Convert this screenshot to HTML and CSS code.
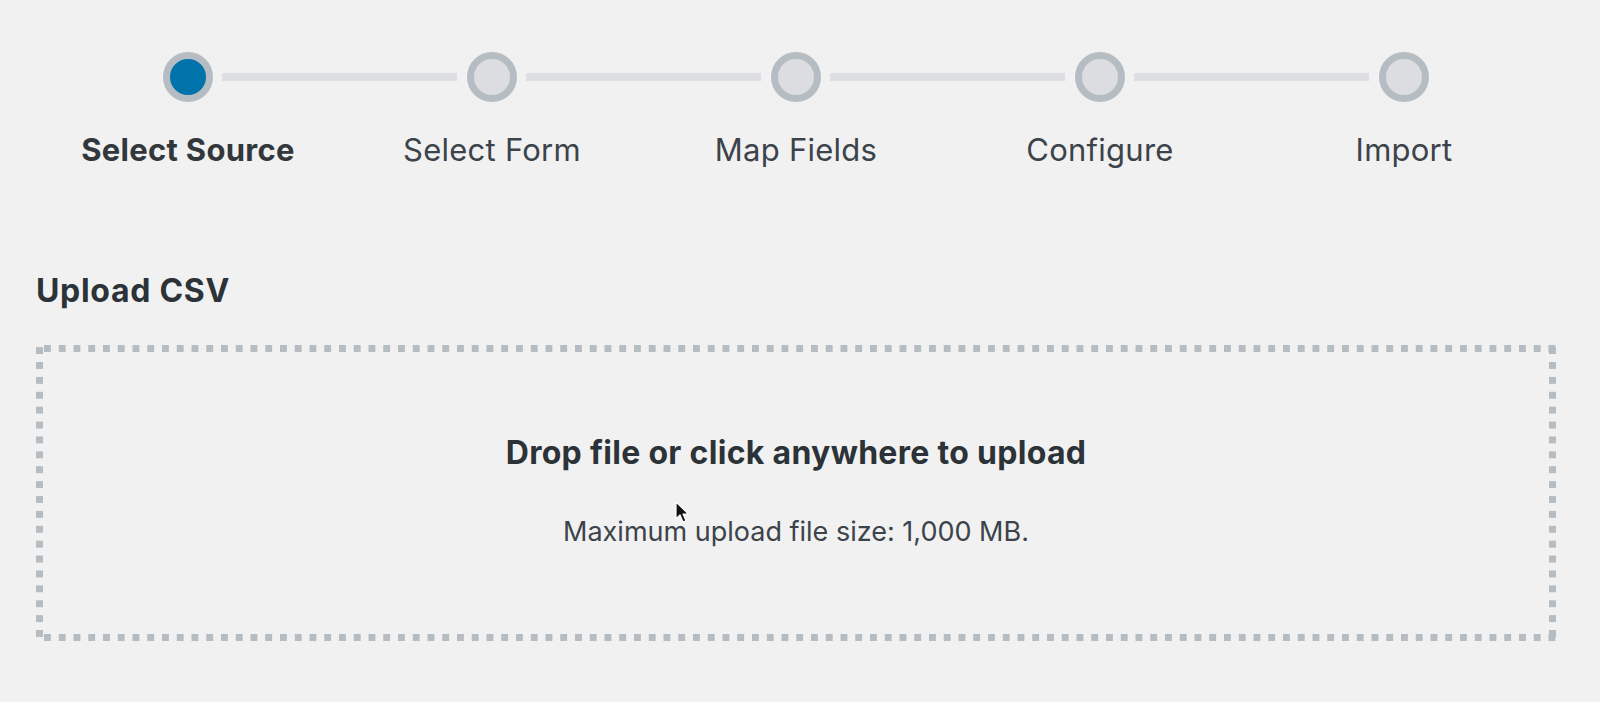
FILE: index.html
```html
<!DOCTYPE html>
<html lang="en">
<head>
<meta charset="utf-8">
<title>Import Donations</title>
<link rel="stylesheet" href="styles.css">
</head>
<body>
<main class="page">
  <section class="wizard">
    <div class="track">
      <span class="node active"></span>
      <span class="bar"></span>
      <span class="node"></span>
      <span class="bar"></span>
      <span class="node"></span>
      <span class="bar"></span>
      <span class="node"></span>
      <span class="bar"></span>
      <span class="node"></span>
    </div>
    <ol class="labels">
      <li class="current">Select Source</li>
      <li>Select Form</li>
      <li>Map Fields</li>
      <li>Configure</li>
      <li>Import</li>
    </ol>
  </section>

  <h2 class="section-title">Upload CSV</h2>

  <div class="dropzone">
    <p class="drop-title">Drop file or click anywhere to upload</p>
    <p class="drop-note">Maximum upload file size: 1,000 MB.</p>
    <svg class="cursor" width="15" height="23" viewBox="0 0 15 23" aria-hidden="true">
      <path d="M1 1 L1 18 L5 14 L8 21 L11 19.8 L8 13 L13.5 13 Z" fill="#111" stroke="#fff" stroke-width="1.2" stroke-linejoin="round"/>
    </svg>
  </div>
</main>
</body>
</html>
```

FILE: styles.css
```css
html, body {
  margin: 0;
  padding: 0;
  background: #f1f1f1;
}

body {
  font-family: Inter, "Noto Sans", "Liberation Sans", sans-serif;
  color: #32373c;
}

.page {
  width: 1520px;
  padding: 0 44px 0 36px;
}

.wizard {
  padding-top: 52px;
}

.track {
  display: flex;
  align-items: center;
  margin: 0 127px;
}

.node {
  flex: none;
  width: 36px;
  height: 36px;
  border: 7px solid #b5bcc2;
  border-radius: 50%;
  background: #dcdde0;
}

.node.active {
  background: #0073aa;
}

.bar {
  flex: 1;
  height: 8px;
  margin: 0 10px 0 9px;
  background: #dcdee1;
}

.labels {
  display: grid;
  grid-template-columns: repeat(5, 1fr);
  list-style: none;
  margin: 30px 0 0;
  padding: 0;
  font-size: 31px;
  line-height: 36px;
  letter-spacing: 0.25px;
  text-align: center;
  color: #3c434a;
  font-weight: 400;
}

.labels .current {
  font-weight: 700;
  letter-spacing: 0.3px;
  color: #32373c;
}

.section-title {
  margin: 105px 0 0;
  font-size: 32px;
  line-height: 36px;
  letter-spacing: 0.7px;
  font-weight: 700;
  color: #2c3338;
}

.dropzone {
  position: relative;
  margin-top: 36px;
  height: 296px;
  box-sizing: border-box;
  padding-top: 90px;
  text-align: center;
  background:
    linear-gradient(90deg, #b5bcc2 0 7px, transparent 7px) 8px 0 / 14.75px 7px repeat-x,
    linear-gradient(90deg, #b5bcc2 0 7px, transparent 7px) 8px 100% / 14.75px 7px repeat-x,
    linear-gradient(180deg, #b5bcc2 0 7px, transparent 7px) 0 17px / 7px 14.9px repeat-y,
    linear-gradient(180deg, #b5bcc2 0 7px, transparent 7px) 100% 17px / 7px 14.9px repeat-y;
}

.drop-title {
  margin: 0;
  font-size: 32px;
  line-height: 36px;
  letter-spacing: 0.3px;
  font-weight: 700;
  color: #2c3338;
}

.drop-note {
  margin: 45px 0 0;
  font-size: 27px;
  line-height: 32px;
  color: #3c434a;
}

.cursor {
  position: absolute;
  left: 639px;
  top: 156px;
}
```
